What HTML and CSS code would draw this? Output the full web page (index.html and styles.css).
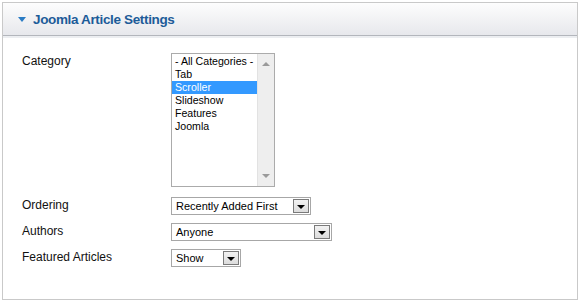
FILE: index.html
```html
<!DOCTYPE html>
<html>
<head>
<meta charset="utf-8">
<link rel="stylesheet" href="styles.css">
</head>
<body>
<div class="panel">
  <div class="panel-header">
    <span class="caret"></span>
    <h3 class="title">Joomla Article Settings</h3>
  </div>
  <div class="panel-body">
    <div class="row row-cat">
      <div class="label label-cat">Category</div>
      <div class="listbox">
        <div class="options">
          <div class="opt">- All Categories -</div>
          <div class="opt">Tab</div>
          <div class="opt selected">Scroller</div>
          <div class="opt">Slideshow</div>
          <div class="opt">Features</div>
          <div class="opt">Joomla</div>
        </div>
        <div class="scrollbar">
          <span class="sb-up"></span>
          <span class="sb-down"></span>
        </div>
      </div>
    </div>
    <div class="rows">
      <div class="row">
        <div class="label">Ordering</div>
        <div class="select w-ordering"><span class="sel-text">Recently Added First</span><span class="sel-btn"><span class="sel-arrow"></span></span></div>
      </div>
      <div class="row">
        <div class="label">Authors</div>
        <div class="select w-authors"><span class="sel-text">Anyone</span><span class="sel-btn"><span class="sel-arrow"></span></span></div>
      </div>
      <div class="row">
        <div class="label">Featured Articles</div>
        <div class="select w-featured"><span class="sel-text">Show</span><span class="sel-btn"><span class="sel-arrow"></span></span></div>
      </div>
    </div>
  </div>
</div>
</body>
</html>
```

FILE: styles.css
```css
html, body {
  margin: 0;
  padding: 0;
  background: #ffffff;
}
body {
  font-family: "Liberation Sans", Arial, sans-serif;
  color: #111;
}
.panel {
  margin: 2px 0 0 2px;
  width: 576px;
  height: 298px;
  box-sizing: border-box;
  border: 1px solid #c9c9c9;
  background: #fff;
}
.panel-header {
  height: 32px;
  border-bottom: 1px solid #b3b6bc;
  background: linear-gradient(#fdfdfd, #e7e8ec);
  display: flex;
  align-items: center;
  padding-left: 15px;
}
.caret {
  width: 0;
  height: 0;
  border-left: 4px solid transparent;
  border-right: 4px solid transparent;
  border-top: 5px solid #2b7cc4;
  margin-right: 7px;
  margin-top: 1px;
}
.title {
  margin: 0;
  font-size: 13.5px;
  letter-spacing: -0.35px;
  font-weight: bold;
  color: #1d5c99;
}
.panel-body {
  border-top: 2px solid #eceef1;
  padding: 15px 0 0 19px;
}
.row {
  display: flex;
  align-items: flex-start;
}
.row-cat {
  margin-bottom: 10px;
}
.label {
  width: 149px;
  flex: none;
  font-size: 12px;
  line-height: 17px;
  color: #111;
}
.label-cat {
  line-height: 16px;
}
.listbox {
  width: 104px;
  height: 134px;
  box-sizing: border-box;
  border: 1px solid #ababab;
  display: flex;
  background: #fff;
}
.options {
  flex: 1;
  padding-top: 1px;
}
.opt {
  height: 13px;
  line-height: 13px;
  font-size: 10.6px;
  padding-left: 3px;
  color: #000;
  white-space: nowrap;
}
.opt.selected {
  background: #3399ff;
  color: #fff;
}
.scrollbar {
  width: 17px;
  flex: none;
  background: #eeeeee;
  border-left: 1px solid #e2e2e2;
  display: flex;
  flex-direction: column;
  justify-content: space-between;
  align-items: center;
  padding: 8px 0 8px;
  box-sizing: border-box;
}
.sb-up {
  width: 0;
  height: 0;
  border-left: 4px solid transparent;
  border-right: 4px solid transparent;
  border-bottom: 4px solid #9a9a9a;
}
.sb-down {
  width: 0;
  height: 0;
  border-left: 4px solid transparent;
  border-right: 4px solid transparent;
  border-top: 4px solid #9a9a9a;
}
.rows {
  display: flex;
  flex-direction: column;
  gap: 8px;
}
.select {
  height: 18px;
  box-sizing: border-box;
  border: 1px solid #a7a7a7;
  display: flex;
  align-items: center;
  justify-content: space-between;
  background: #fff;
  padding: 0 1px 0 4px;
}
.w-ordering { width: 140px; }
.w-authors { width: 161px; }
.w-featured { width: 70px; }
.sel-text {
  font-size: 11px;
  color: #000;
  white-space: nowrap;
}
.sel-btn {
  width: 16px;
  height: 14px;
  box-sizing: border-box;
  border: 1px solid #7a7a7a;
  background: linear-gradient(#f2f2f2, #dcdcdc);
  display: flex;
  align-items: center;
  justify-content: center;
}
.sel-arrow {
  width: 0;
  height: 0;
  border-left: 4px solid transparent;
  border-right: 4px solid transparent;
  border-top: 4px solid #000;
  margin-top: 2px;
}
```
